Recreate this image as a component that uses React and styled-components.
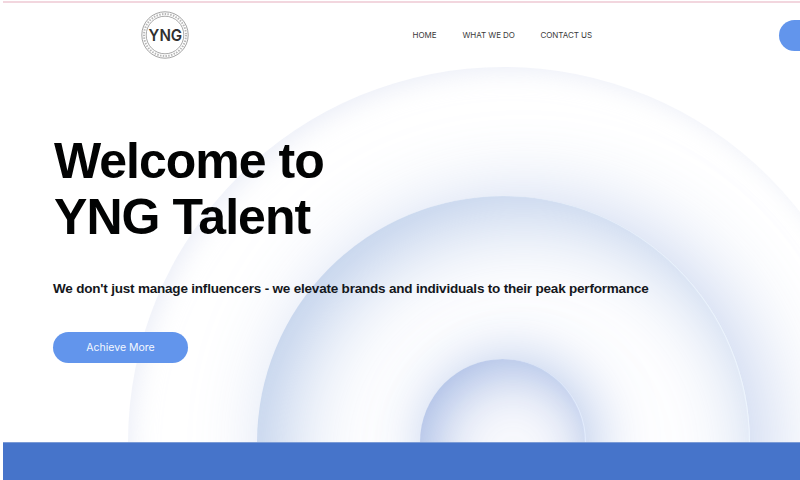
import React from 'react';
import styled, { createGlobalStyle } from 'styled-components';

const GlobalStyle = createGlobalStyle`
	*,
	*::before,
	*::after {
		box-sizing: border-box;
	}
	body {
		margin: 0;
		background: #fff;
		overflow: hidden;
	}
`;
const DivPage = styled.div`
	display: flex;
	flex-direction: column;
	width: 800px;
	height: 480px;
	padding: 1px 0 0 3px;
	overflow: hidden;
	font-family: Inter, sans-serif;
`;
const MainHero = styled.main`
	position: relative;
	height: 441px;
	border-top: 2px solid #f2d6de;
	overflow: hidden;
`;
const DivRings = styled.div`
	position: absolute;
	inset: 0;
`;
const DivRing = styled.div`
	position: absolute;
	left: ${({ $r }) => 500 - $r}px;
	top: ${({ $r }) => 439 - $r}px;
	width: ${({ $r }) => $r * 2}px;
	height: ${({ $r }) => $r * 2}px;
	border-radius: 50%;
	background: ${({ $fill }) => $fill};
	box-shadow: ${({ $shadow }) => $shadow};
`;
const HeaderBar = styled.header`
	position: relative;
	display: flex;
	align-items: center;
	height: 64px;
	padding-left: 137px;
`;
const SvgLogo = styled.svg`
	display: block;
	width: 50px;
	height: 50px;
	flex: none;
`;
const NavMenu = styled.nav`
	display: flex;
	gap: 26px;
	margin-left: 222.5px;
`;
const LinkMenu = styled.a`
	width: ${({ $width }) => $width}px;
	font-size: 8px;
	line-height: 12px;
	letter-spacing: -0.05px;
	white-space: nowrap;
	color: #3a3a3a;
	text-decoration: none;
`;
const LinkHeaderAction = styled.a`
	flex: none;
	width: 132px;
	height: 31px;
	margin-left: 186px;
	border-radius: 16px;
	background: #6295ec;
`;
const SectionIntro = styled.section`
	position: relative;
	display: flex;
	flex-direction: column;
	align-items: flex-start;
	padding: 66px 0 0 50px;
`;
const H1Title = styled.h1`
	margin: 0 0 0 1px;
	font-family: 'Liberation Sans', sans-serif;
	font-size: 50px;
	font-weight: 700;
	line-height: 56px;
	color: #020303;
`;
const SpanLine = styled.span`
	display: block;
	white-space: nowrap;
	letter-spacing: ${({ $spacing }) => $spacing}px;
`;
const PTagline = styled.p`
	margin: 34px 0 0;
	font-family: 'Liberation Sans', sans-serif;
	font-size: 13.5px;
	font-weight: 700;
	line-height: 20px;
	letter-spacing: -0.2px;
	white-space: nowrap;
	color: #14171c;
`;
const LinkAchieve = styled.a`
	display: flex;
	align-items: center;
	justify-content: center;
	width: 135px;
	height: 31px;
	margin-top: 33px;
	border-radius: 16px;
	background: #6295ec;
	font-size: 10.5px;
	color: #f4f8ff;
	text-decoration: none;
`;
const FooterBand = styled.footer`
	flex: 1;
	border-top: 1px solid #7b9bd6;
	background: #4674ca;
`;

const rings = [
	{ r: 375.5, fill: '#fff', shadow: 'inset 7px 7px 26px -4px rgba(216, 222, 240, 0.55)' },
	{
		r: 246.5,
		fill: '#fefeff',
		shadow:
			'inset -1px 0 1px rgba(240, 247, 255, 0.9), inset 20px 14px 88px rgba(158, 184, 224, 0.74), 20px 4px 84px rgba(182, 198, 234, 0.74)'
	},
	{
		r: 83,
		fill: '#f8f9fd',
		shadow:
			'inset -1px 0 1px rgba(232, 241, 255, 0.9), inset 10px 9px 60px rgba(140, 166, 220, 0.8), 8px 0 64px rgba(160, 184, 226, 0.8)'
	}
];

const menu = [
	{ label: 'HOME', width: 24 },
	{ label: 'WHAT WE DO', width: 52 },
	{ label: 'CONTACT US', width: 52 }
];

const Logo = () => (
	<SvgLogo viewBox="0 0 50 50" role="img" aria-label="YNG">
		<circle cx="25" cy="25" r="23.2" fill="none" stroke="#8c8c8c" strokeWidth="0.8" />
		<circle cx="25" cy="25" r="21" fill="none" stroke="#b8b8b8" strokeWidth="2" strokeDasharray="1.5 1.3" />
		<circle cx="25" cy="25" r="18.8" fill="none" stroke="#929292" strokeWidth="0.8" />
		<text
			x="8.6"
			y="31.4"
			textLength="33.6"
			lengthAdjust="spacingAndGlyphs"
			fontFamily="Inter, sans-serif"
			fontSize="16.5"
			fontWeight="600"
			fill="#303030"
		>
			YNG
		</text>
	</SvgLogo>
);

const App = () => (
	<>
		<GlobalStyle />
		<DivPage>
			<MainHero>
				<DivRings aria-hidden="true">
					{rings.map((ring) => (
						<DivRing key={ring.r} $r={ring.r} $fill={ring.fill} $shadow={ring.shadow} />
					))}
				</DivRings>
				<HeaderBar>
					<Logo />
					<NavMenu>
						{menu.map((item) => (
							<LinkMenu key={item.label} href="#" $width={item.width}>
								{item.label}
							</LinkMenu>
						))}
					</NavMenu>
					<LinkHeaderAction href="#" />
				</HeaderBar>
				<SectionIntro>
					<H1Title>
						<SpanLine $spacing={-1}>Welcome to</SpanLine>
						<SpanLine $spacing={-0.95}>YNG Talent</SpanLine>
					</H1Title>
					<PTagline>
						We don't just manage influencers - we elevate brands and individuals to their peak performance
					</PTagline>
					<LinkAchieve href="#">Achieve More</LinkAchieve>
				</SectionIntro>
			</MainHero>
			<FooterBand />
		</DivPage>
	</>
);

export default App;
